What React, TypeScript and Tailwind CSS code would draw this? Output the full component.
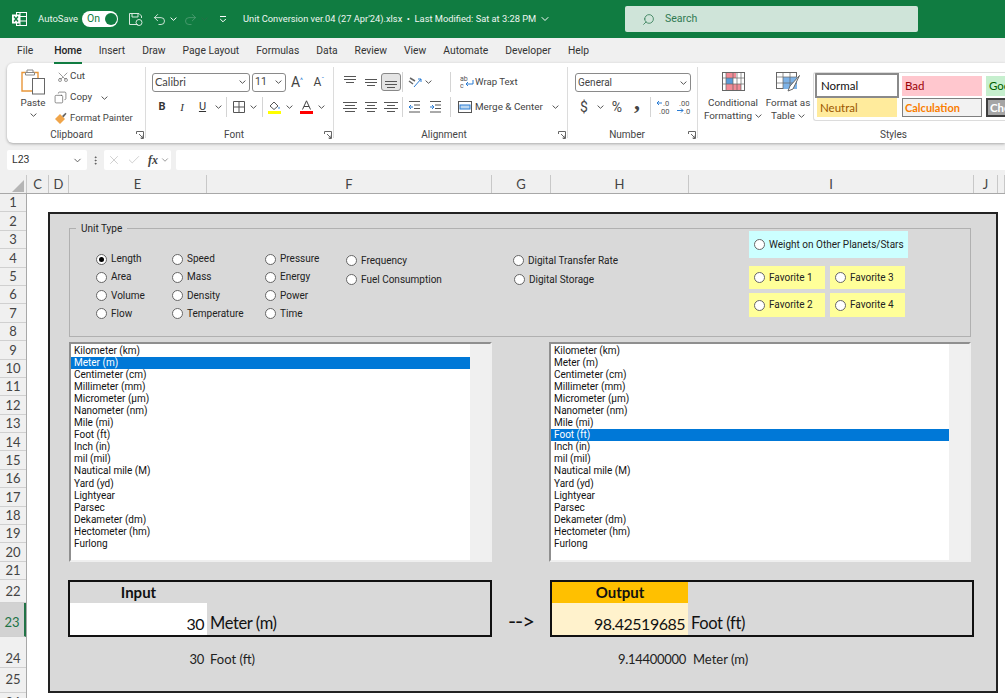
import React from 'react';
import { Search, ChevronDown, Undo2, Redo2, Scissors, Copy, X, Check, MoreVertical } from 'lucide-react';

const ROWS: [string, string][] = [
  ...Array.from({ length: 21 }, (_, i): [string, string] => [String(i + 1), 'h-[18.4px] pt-px']),
  ['22', 'h-[23px] pt-[2px]'],
  ['23', 'h-[34px] pt-[6px]'],
  ['24', 'h-[31px] pt-[13px]'],
  ['25', 'h-[25px] pt-0'],
  ['26', 'h-[20px] pt-0'],
];

const COLS: [string, string][] = [
  ['C', 'w-[22px]'], ['D', 'w-[20px]'], ['E', 'w-[138px]'], ['F', 'w-[285px]'], ['G', 'w-[59px]'],
  ['H', 'w-[138px]'], ['I', 'w-[285px]'], ['J', 'w-[24px]'], ['', 'w-[7px]'],
];

const TABS = ['File', 'Home', 'Insert', 'Draw', 'Page Layout', 'Formulas', 'Data', 'Review', 'View', 'Automate', 'Developer', 'Help'];

const UNITS = [
  'Kilometer (km)', 'Meter (m)', 'Centimeter (cm)', 'Millimeter (mm)', 'Micrometer (µm)', 'Nanometer (nm)', 'Mile (mi)', 'Foot (ft)',
  'Inch (in)', 'mil (mil)', 'Nautical mile (M)', 'Yard (yd)', 'Lightyear', 'Parsec', 'Dekameter (dm)', 'Hectometer (hm)', 'Furlong',
];

const Caret = ({ className = '' }: { className?: string }) => (
  <svg width="7" height="4" viewBox="0 0 7 4" className={className}>
    <path d="M.6.6 3.5 3.3 6.4.6" fill="none" stroke="#555" strokeWidth="1" />
  </svg>
);

const Launcher = () => (
  <svg width="8" height="8" viewBox="0 0 8 8" className="absolute right-[2px] bottom-[4px]">
    <path d="M.5 3V.5H7.5V7.5H5M3 3 7 7M7 4.5V7H4.5" fill="none" stroke="#666" strokeWidth="1" />
  </svg>
);

const Sep = () => <div className="w-px h-[20px] bg-[#d4d4d4]" />;

const Lines = ({ rows }: { rows: [number, number][] }) => (
  <svg width="14" height="12" viewBox="0 0 14 12">
    {rows.map(([x, y], i) => (
      <rect key={i} x={x} y={y} width={14 - x * 2} height="1" fill="#555" />
    ))}
  </svg>
);

const Slot = ({ w, children }: { w: string; children?: React.ReactNode }) => (
  <div className={`${w} h-[18px] flex items-center justify-center shrink-0`}>{children}</div>
);

const Group = ({ w, label, labelPad, children }: { w: string; label: string; labelPad: string; children: React.ReactNode }) => (
  <div className={`${w} relative shrink-0 flex flex-col h-full`}>
    <div className="h-[66px] overflow-hidden">{children}</div>
    <div className={`${labelPad} text-center text-[10px] leading-[12px] text-[#444]`}>{label}</div>
    <Launcher />
    <div className="absolute right-0 top-[4px] bottom-[5px] w-px bg-[#dcdcdc]" />
  </div>
);

const Radio = ({ label, on = false, className = '' }: { label: string; on?: boolean; className?: string }) => (
  <div className={`flex items-center gap-[4px] ${className}`}>
    <div className="w-[11px] h-[11px] rounded-full border border-[#666] bg-white shrink-0 flex items-center justify-center">
      {on && <div className="w-[5px] h-[5px] rounded-full bg-black" />}
    </div>
    <span className="text-[10px] leading-[12px] text-[#222] whitespace-nowrap">{label}</span>
  </div>
);

const UnitList = ({ selected }: { selected: string }) => (
  <div className="flex h-full border-t-2 border-l-2 border-t-[#8f8f8f] border-l-[#8f8f8f] border-b-2 border-r-2 border-b-[#efefef] border-r-[#efefef] bg-white">
    <div className="flex-1 pt-px">
      {UNITS.map((u) => (
        <div
          key={u}
          className={`h-[12.06px] leading-[12px] text-[10px] overflow-hidden whitespace-nowrap pl-[3px] ${
            u === selected ? 'bg-[#0078d7] text-white' : 'text-[#111]'
          }`}
        >
          {u}
        </div>
      ))}
    </div>
    <div className="w-[20px] bg-[#f0f0f0]" />
  </div>
);

const App: React.FC = () => {
  return (
    <div className="w-[1005px] h-[698px] overflow-hidden flex flex-col bg-[#f0f0f0] font-['Roboto',sans-serif]">
      {/* title bar */}
      <div className="h-[38px] shrink-0 bg-[#107c41] flex items-center text-white">
        <svg width="15" height="14" viewBox="0 0 15 14" className="ml-[12px]">
          <rect x="4.5" y=".5" width="10" height="13" fill="none" stroke="#fff" />
          <path d="M8 .5V13.5M4.5 4.5H14.5M4.5 9H14.5" stroke="#fff" />
          <rect x="0" y="2.5" width="8" height="9" fill="#fff" />
          <path d="M2 4.5 6 9.5M6 4.5 2 9.5" stroke="#107c41" strokeWidth="1.3" />
        </svg>
        <span className="ml-[11px] w-[44px] text-[9.5px] text-[#e8f3ec]">AutoSave</span>
        <div className="w-[36px] h-[16px] rounded-full bg-white flex items-center justify-between pl-[5px] pr-[1px]">
          <span className="text-[10.5px] leading-none text-[#107c41]">On</span>
          <div className="w-[12px] h-[12px] rounded-full bg-[#107c41]" />
        </div>
        <svg width="15" height="14" viewBox="0 0 15 14" className="ml-[10px]">
          <path d="M10 12.5H1.5V1.5H11L13.5 4V6M4 1.5V5H10V1.5" fill="none" stroke="#d7e9de" />
          <circle cx="11" cy="10.5" r="3" fill="none" stroke="#d7e9de" />
        </svg>
        <Undo2 size={15} strokeWidth={1.4} className="ml-[9px] text-[#e3f0e8]" />
        <Caret className="ml-[3px] [&>path]:stroke-white" />
        <Redo2 size={15} strokeWidth={1.4} className="ml-[6px] text-[#4f9d72]" />
        <Caret className="ml-[3px] opacity-30" />
        <svg width="8" height="7" viewBox="0 0 8 7" className="ml-[11px]">
          <path d="M1 .5H7M1.2 3 4 5.8 6.8 3" fill="none" stroke="#fff" />
        </svg>
        <span className="ml-[16px] w-[296px] text-[9.3px] text-[#eef6f1] whitespace-nowrap">
          Unit Conversion ver.04 (27 Apr'24).xlsx&nbsp; •&nbsp; Last Modified: Sat at 3:28 PM
        </span>
        <ChevronDown size={12} className="text-white" />
        <div className="ml-[74px] w-[293px] h-[26px] rounded-[2px] bg-[#cfe4d9] flex items-center text-[#2f7a53]">
          <Search size={13} strokeWidth={1.5} className="ml-[17px] -scale-x-100" />
          <span className="ml-[10px] text-[10.5px]">Search</span>
        </div>
      </div>

      {/* ribbon tabs */}
      <div className="h-[25px] shrink-0 flex items-center gap-[17px] pl-[17px] pt-px text-[10.3px] text-[#333]">
        {TABS.map((t) => (
          <div
            key={t}
            className={`relative whitespace-nowrap ${t === 'Home' ? 'font-medium text-[#222]' : ''} ${t === 'File' ? 'mr-[4px]' : ''}`}
          >
            {t}
            {t === 'Home' && <div className="absolute left-0 right-0 -bottom-[5px] h-[2px] bg-[#107c41]" />}
          </div>
        ))}
      </div>

      {/* ribbon */}
      <div className="ml-[7px] h-[80px] shrink-0 flex bg-white rounded-l-[6px] shadow-[0_1px_3px_rgba(0,0,0,0.3)] text-[#444]">
        <Group w="w-[139px]" label="Clipboard" labelPad="pr-[10px]">
          <div className="flex pt-[6px]">
            <div className="w-[52px] flex flex-col items-center">
              <svg width="24" height="26" viewBox="0 0 24 26">
                <path d="M1 3.5H17V22H1Z" fill="#fff" stroke="#e8963a" strokeWidth="1.4" />
                <path d="M6 3.5H12V1H6ZM4.5 3.5H13.5V6H4.5Z" fill="#fff" stroke="#888" />
                <rect x="11.5" y="9.5" width="12" height="15.5" fill="#fff" stroke="#666" />
              </svg>
              <span className="mt-[1px] text-[9.8px] leading-[14px]">Paste</span>
              <Caret className="mt-[3px]" />
            </div>
            <div className="text-[9.8px] -mt-[3px] ml-[-5px]">
              <div className="h-[21px] flex items-center">
                <Scissors size={12} strokeWidth={1.2} className="-rotate-90 ml-[3px] text-[#555]" />
                <span className="ml-[1px]">Cut</span>
              </div>
              <div className="h-[21px] flex items-center">
                <Copy size={13} strokeWidth={1.2} className="-scale-x-100 text-[#555]" />
                <span className="ml-[3px]">Copy</span>
                <Caret className="ml-[9px]" />
              </div>
              <div className="h-[21px] flex items-center whitespace-nowrap">
                <svg width="13" height="13" viewBox="0 0 13 13">
                  <path d="M1 7 6 2 11 7 6 12Z" fill="#f0a54a" />
                  <path d="M8 4 11.5 .8 12.5 1.8 9.5 5.5" fill="#666" />
                </svg>
                <span className="ml-[3px] text-[9.5px]">Format Painter</span>
              </div>
            </div>
          </div>
        </Group>

        <Group w="w-[188px]" label="Font" labelPad="pr-[12px]">
          <div className="pt-[10px] pl-[6px]">
            <div className="flex items-center h-[18px]">
              <div className="w-[98px] h-[19px] rounded-[3px] border border-[#8a8a8a] flex items-center justify-between px-[2px] font-['Lato',sans-serif] text-[11px]">
                Calibri
                <Caret className="mr-[1px]" />
              </div>
              <div className="ml-[2px] w-[34px] h-[19px] rounded-[3px] border border-[#8a8a8a] flex items-center justify-between px-[2px] text-[10.5px]">
                11
                <Caret className="mr-[1px]" />
              </div>
              <Slot w="w-[22px]"><span className="text-[14px] text-[#444]">A<sup className="text-[7px] text-[#2b7cd3]">^</sup></span></Slot>
              <Slot w="w-[22px]"><span className="text-[12px] text-[#444]">A<sup className="text-[7px] text-[#2b7cd3]">ˇ</sup></span></Slot>
            </div>
            <div className="flex items-center h-[18px] mt-[7px]">
              <Slot w="w-[20px]"><span className="font-bold text-[11px] text-[#333]">B</span></Slot>
              <Slot w="w-[20px]"><span className="italic text-[11px] text-[#333] font-['Liberation_Serif',serif]">I</span></Slot>
              <Slot w="w-[21px]"><span className="underline text-[11px] text-[#333]">U</span></Slot>
              <Slot w="w-[10px]"><Caret /></Slot>
              <Slot w="w-[7px]"><Sep /></Slot>
              <Slot w="w-[18px]">
                <svg width="12" height="12" viewBox="0 0 12 12"><path d="M.5.5H11.5V11.5H.5ZM6 .5V11.5M.5 6H11.5" fill="none" stroke="#555" /></svg>
              </Slot>
              <Slot w="w-[11px]"><Caret /></Slot>
              <Slot w="w-[7px]"><Sep /></Slot>
              <Slot w="w-[16px]">
                <svg width="13" height="14" viewBox="0 0 13 14">
                  <path d="M2 6 6 2 10 6 6 9.5Z" fill="#fff" stroke="#555" />
                  <path d="M11 6.5 12 8.5H10Z" fill="#2b7cd3" />
                  <rect x="0" y="11" width="13" height="3" fill="#ffff00" />
                </svg>
              </Slot>
              <Slot w="w-[14px]"><Caret /></Slot>
              <Slot w="w-[20px]">
                <svg width="13" height="14" viewBox="0 0 13 14">
                  <path d="M2.5 9.5 6.5 .8 10.5 9.5M4 6.5H9" fill="none" stroke="#444" strokeWidth="1" />
                  <rect x="0" y="11" width="13" height="3" fill="#ff0000" />
                </svg>
              </Slot>
              <Slot w="w-[11px]"><Caret /></Slot>
            </div>
          </div>
        </Group>

        <Group w="w-[234px]" label="Alignment" labelPad="pr-[14px]">
          <div className="pt-[10px] pl-[5px]">
            <div className="flex items-center h-[18px]">
              <Slot w="w-[21px]"><Lines rows={[[1, 0], [1, 3], [3, 6]]} /></Slot>
              <Slot w="w-[21px]"><Lines rows={[[1, 3], [1, 6], [3, 9]]} /></Slot>
              <div className="w-[20px] h-[18px] rounded-[3px] border border-[#888] bg-[#e4e4e4] flex items-center justify-center"><Lines rows={[[1, 5], [1, 8], [3, 11]]} /></div>
              <Slot w="w-[3px]"><Sep /></Slot>
              <Slot w="w-[21px]">
                <svg width="14" height="13" viewBox="0 0 14 13">
                  <path d="M2 2 7 5M1 5 5 8" stroke="#666" strokeWidth="1.5" />
                  <path d="M6 11 13 3M13 3H10M13 3V6" fill="none" stroke="#2b7cd3" />
                </svg>
              </Slot>
              <Slot w="w-[7px]"><Caret /></Slot>
              <Slot w="w-[18px]" />
              <Sep />
              <Slot w="w-[8px]" />
              <Slot w="w-[15px]">
                <svg width="14" height="14" viewBox="0 0 14 14">
                  <text x="0" y="6" fontSize="7" fill="#555">ab</text>
                  <text x="0" y="13" fontSize="7" fill="#555">c</text>
                  <path d="M13 5V9H6M8 7 6 9 8 11" fill="none" stroke="#2b7cd3" />
                </svg>
              </Slot>
              <span className="ml-px text-[9.6px] whitespace-nowrap">Wrap Text</span>
            </div>
            <div className="flex items-center h-[18px] mt-[7px]">
              <Slot w="w-[21px]"><Lines rows={[[0, 1], [2, 4], [0, 7], [2, 10]]} /></Slot>
              <Slot w="w-[21px]"><Lines rows={[[1, 1], [3, 4], [1, 7], [3, 10]]} /></Slot>
              <Slot w="w-[20px]"><Lines rows={[[0, 1], [3, 4], [0, 7], [3, 10]]} /></Slot>
              <Slot w="w-[3px]"><Sep /></Slot>
              <Slot w="w-[21px]">
                <svg width="13" height="12" viewBox="0 0 13 12"><path d="M1 .5H12M6 4H12M6 7.5H12M1 11H12" stroke="#555" /><path d="M5 6H1M3 4 1 6 3 8" fill="none" stroke="#2b7cd3" /></svg>
              </Slot>
              <Slot w="w-[20px]">
                <svg width="13" height="12" viewBox="0 0 13 12"><path d="M1 .5H12M6 4H12M6 7.5H12M1 11H12" stroke="#555" /><path d="M1 6H5M3 4 5 6 3 8" fill="none" stroke="#2b7cd3" /></svg>
              </Slot>
              <Slot w="w-[10px]"><Sep /></Slot>
              <Slot w="w-[3px]" />
              <Slot w="w-[14px]">
                <svg width="14" height="12" viewBox="0 0 14 12">
                  <rect x=".5" y=".5" width="13" height="11" fill="#fff" stroke="#555" />
                  <rect x="2" y="4" width="10" height="4" fill="#bcd7f0" stroke="#2b7cd3" />
                </svg>
              </Slot>
              <span className="ml-[3px] w-[70px] text-[9.9px] whitespace-nowrap">Merge &amp; Center</span>
              <Caret className="ml-[7px]" />
            </div>
          </div>
        </Group>

        <Group w="w-[130px]" label="Number" labelPad="pr-[12px]">
          <div className="pt-[10px] pl-[7px]">
            <div className="w-[116px] h-[19px] rounded-[3px] border border-[#8a8a8a] flex items-center justify-between px-[2px] text-[10px]">
              General
              <Caret className="mr-[1px]" />
            </div>
            <div className="flex items-center h-[18px] mt-[6px]">
              <Slot w="w-[18px]"><span className="text-[14px] text-[#444]">$</span></Slot>
              <Slot w="w-[14px]"><Caret /></Slot>
              <Slot w="w-[20px]"><span className="text-[14px] text-[#444]">%</span></Slot>
              <Slot w="w-[20px]"><span className="text-[24px] leading-[12px] -mt-[12px] font-bold text-[#444] font-['Liberation_Serif',serif]">,</span></Slot>
              <Slot w="w-[6px]"><Sep /></Slot>
              <Slot w="w-[20px]">
                <svg width="15" height="14" viewBox="0 0 15 14"><text x="7" y="6" fontSize="7.5" fill="#555">.0</text><text x="3" y="13.5" fontSize="7.5" fill="#555">.00</text><path d="M6 3H1M3 1 1 3 3 5" fill="none" stroke="#2b7cd3" /></svg>
              </Slot>
              <Slot w="w-[21px]">
                <svg width="15" height="14" viewBox="0 0 15 14"><text x="3" y="6" fontSize="7.5" fill="#555">.00</text><text x="8" y="13.5" fontSize="7.5" fill="#555">.0</text><path d="M1 10.5H7M5 8.5 7 10.5 5 12.5" fill="none" stroke="#2b7cd3" /></svg>
              </Slot>
            </div>
          </div>
        </Group>

        <div className="flex-1 flex flex-col min-w-0 relative">
          <div className="h-[66px] flex overflow-hidden">
            <div className="w-[70px] pt-[9px] flex flex-col items-center shrink-0">
              <svg width="23" height="19" viewBox="0 0 23 19">
                <rect x=".5" y=".5" width="22" height="18" fill="#fff" stroke="#666" />
                <rect x="4" y="1" width="10" height="5" fill="#f28a96" />
                <rect x="4" y="6" width="7" height="6" fill="#5a9bd8" />
                <rect x="4" y="12" width="15" height="6" fill="#f28a96" />
                <path d="M4 0V19M11 0V19M15 0V19M19 0V19M0 6H23M0 12H23" stroke="#666" strokeWidth=".7" />
              </svg>
              <div className="mt-[5px] text-[9.9px] leading-[13px] text-center whitespace-nowrap">
                Conditional
                <div className="flex items-center justify-center gap-[3px]">Formatting<Caret /></div>
              </div>
            </div>
            <div className="w-[40px] pt-[9px] flex flex-col items-center shrink-0">
              <svg width="25" height="20" viewBox="0 0 25 20">
                <rect x=".5" y=".5" width="20" height="16" fill="#fff" stroke="#666" />
                <rect x="7" y="5" width="14" height="12" fill="#7db3e8" />
                <path d="M7 0V17M14 0V17M0 5H21M0 11H21" stroke="#666" strokeWidth=".7" />
                <path d="M23.5 3.5 14 14 12 19 17 17Z" fill="#fff" stroke="#666" />
              </svg>
              <div className="mt-[4px] text-[9.9px] leading-[13px] text-center whitespace-nowrap">
                Format as
                <div className="flex items-center justify-center gap-[3px]">Table<Caret /></div>
              </div>
            </div>
            <div className="ml-[5px] mt-[9px] h-[49px] flex-1 min-w-0 border border-r-0 border-[#dcdcdc] rounded-l-[3px] grid grid-cols-[86px_84px_84px] grid-rows-[25px_21px] overflow-hidden text-[11.5px] leading-none font-['Lato',sans-serif]">
              <div className="border-2 border-[#8a8a8a] bg-white mx-[1px] flex items-center pl-[4px] text-[#111]">Normal</div>
              <div className="bg-[#ffc7ce] mt-[3px] mb-[2px] mx-[2px] flex items-center pl-[3px] text-[#9c0006]">Bad</div>
              <div className="bg-[#c6efce] mt-[3px] mb-[2px] mx-[2px] flex items-center pl-[3px] text-[#006100]">Good</div>
              <div className="bg-[#ffeb9c] mx-[3px] mb-[2px] flex items-center pl-[3px] text-[#9c5700]">Neutral</div>
              <div className="bg-[#f2f2f2] border border-[#7f7f7f] mx-[2px] mb-[2px] flex items-center pl-[2px] font-bold text-[#fa7d00] text-[11px]">Calculation</div>
              <div className="bg-[#a5a5a5] border-2 border-[#3f3f3f] mx-[2px] mb-[2px] flex items-center pl-[2px] font-bold text-white">Check</div>
            </div>
          </div>
          <div className="pl-[84px] text-center text-[10px] leading-[12px]">Styles</div>
        </div>
      </div>

      {/* formula bar */}
      <div className="h-[20px] mt-[7px] shrink-0 flex items-stretch">
        <div className="ml-[7px] w-[80px] bg-white rounded-[2px] flex items-center justify-between pl-[5px] pr-[4px] text-[10.5px] text-[#333]">
          L23
          <ChevronDown size={11} className="text-[#555]" />
        </div>
        <div className="w-[17px] flex items-center justify-center">
          <MoreVertical size={11} className="text-[#555]" />
        </div>
        <div className="w-[67px] bg-white rounded-[2px] flex items-center pl-[3px] text-[#bcbcbc]">
          <X size={14} strokeWidth={1.2} />
          <Check size={14} strokeWidth={1.2} className="ml-[6px]" />
          <span className="ml-[7px] italic font-bold text-[12px] text-[#444] font-['Liberation_Serif',serif]">fx</span>
          <ChevronDown size={10} className="ml-[2px] text-[#888]" />
        </div>
        <div className="ml-[5px] flex-1 bg-white rounded-l-[2px]" />
      </div>

      {/* column headers */}
      <div className="h-[19px] mt-[5px] shrink-0 flex border-b border-[#a8a8a8] text-[13px] leading-[19px] text-[#444] font-['Lato',sans-serif]">
        <div className="w-[27px] shrink-0 relative border-r border-[#c8c8c8]">
          <svg width="12" height="12" viewBox="0 0 12 12" className="absolute right-[2px] bottom-[1px]">
            <path d="M12 0V12H0Z" fill="#b5b5b5" />
          </svg>
        </div>
        {COLS.map(([c, w]) => (
          <div key={c} className={`${w} text-center border-r border-[#c8c8c8] shrink-0`}>{c}</div>
        ))}
      </div>

      <div className="flex-1 min-h-0 flex">
        {/* row headers */}
        <div className="w-[27px] shrink-0 border-r border-[#a8a8a8] text-[13px] text-[#444] font-['Lato',sans-serif]">
          {ROWS.map(([r, h]) => (
            <div
              key={r}
              className={`${h} flex items-center justify-center border-b border-[#d0d0d0] ${
                r === '23' ? 'bg-[#d2d2d2] text-[#217346] border-r-2 border-r-[#217346]' : ''
              }`}
            >
              {r}
            </div>
          ))}
        </div>

        {/* sheet */}
        <div className="flex-1 bg-white pl-[21px] pt-[18px]">
          <div className="w-[950px] h-[481px] border-2 border-[#222] bg-[#d9d9d9] flex flex-col">
            {/* unit type group */}
            <div className="relative ml-[19px] mt-[14px] w-[902px] h-[109px] shrink-0 border border-[#b0b0b0] flex">
              <span className="absolute left-[6px] -top-[6px] bg-[#d9d9d9] px-[5px] text-[10px] leading-[12px] text-[#222]">Unit Type</span>
              <div className="w-[102px] pl-[26px] pt-[21px] shrink-0">
                <Radio label="Length" on className="h-[18px]" />
                <Radio label="Area" className="h-[18.4px]" />
                <Radio label="Volume" className="h-[18.4px]" />
                <Radio label="Flow" className="h-[18.4px]" />
              </div>
              <div className="w-[93px] pt-[21px] shrink-0">
                <Radio label="Speed" className="h-[18px]" />
                <Radio label="Mass" className="h-[18.4px]" />
                <Radio label="Density" className="h-[18.4px]" />
                <Radio label="Temperature" className="h-[18.4px]" />
              </div>
              <div className="w-[81px] pt-[21px] shrink-0">
                <Radio label="Pressure" className="h-[18px]" />
                <Radio label="Energy" className="h-[18.4px]" />
                <Radio label="Power" className="h-[18.4px]" />
                <Radio label="Time" className="h-[18.4px]" />
              </div>
              <div className="w-[167px] pt-[22px] shrink-0">
                <Radio label="Frequency" className="h-[19px]" />
                <Radio label="Fuel Consumption" className="h-[19px]" />
              </div>
              <div className="w-[236px] pt-[22px] shrink-0">
                <Radio label="Digital Transfer Rate" className="h-[19px]" />
                <Radio label="Digital Storage" className="h-[19px] ml-px" />
              </div>
              <div className="pt-[2px] shrink-0">
                <div className="w-[159px] h-[27px] bg-[#ccffff] pl-[5px] flex items-center">
                  <Radio label="Weight on Other Planets/Stars" />
                </div>
                <div className="mt-[8px] flex gap-[5px]">
                  <div className="w-[76px] h-[23px] bg-[#ffff99] pl-[5px] flex items-center"><Radio label="Favorite 1" /></div>
                  <div className="w-[75px] h-[23px] bg-[#ffff99] pl-[5px] flex items-center"><Radio label="Favorite 3" /></div>
                </div>
                <div className="mt-[4px] flex gap-[5px]">
                  <div className="w-[76px] h-[24px] bg-[#ffff99] pl-[5px] flex items-center"><Radio label="Favorite 2" /></div>
                  <div className="w-[75px] h-[24px] bg-[#ffff99] pl-[5px] flex items-center"><Radio label="Favorite 4" /></div>
                </div>
              </div>
            </div>

            {/* unit lists */}
            <div className="ml-[19px] mt-[5px] h-[220px] shrink-0 flex">
              <div className="w-[423px]"><UnitList selected="Meter (m)" /></div>
              <div className="ml-[57px] w-[422px]"><UnitList selected="Foot (ft)" /></div>
            </div>

            {/* input and output */}
            <div className="ml-[18px] mt-[18px] h-[57px] shrink-0 flex font-['Lato',sans-serif] text-[#111]">
              <div className="w-[424px] border-2 border-[#111] flex flex-col">
                <div className="w-[137px] h-[21px] text-center font-bold text-[15px] leading-[21px]">Input</div>
                <div className="h-[32px] flex items-end text-[16.5px] leading-[23px]">
                  <div className="w-[137px] h-full bg-white flex items-end justify-end pr-[3px] text-[16px] tracking-[-0.5px]">30</div>
                  <span className="ml-[3px] tracking-[-0.4px]">Meter (m)</span>
                </div>
              </div>
              <div className="w-[58px] flex items-center justify-center pt-[24px] text-[22px] tracking-[-1px]">--&gt;</div>
              <div className="w-[424px] border-2 border-[#111] flex flex-col">
                <div className="w-[136px] h-[21px] bg-[#ffc000] text-center font-bold text-[15px] leading-[21px]">Output</div>
                <div className="h-[32px] flex items-end text-[16.5px] leading-[23px]">
                  <div className="w-[136px] h-full bg-[#fff2cc] flex items-end justify-end pr-[3px] text-[16px] tracking-[-0.5px]">98.42519685</div>
                  <span className="ml-[3px] tracking-[-0.4px]">Foot (ft)</span>
                </div>
              </div>
            </div>

            {/* reverse conversion */}
            <div className="ml-[18px] mt-[13px] flex text-[13px] leading-[18px] text-[#222] font-['Lato',sans-serif]">
              <div className="w-[136px] text-right tracking-[-0.3px]">30</div>
              <span className="ml-[6px] w-[340px]">Foot (ft)</span>
              <div className="w-[136px] text-right tracking-[-0.3px]">9.14400000</div>
              <span className="ml-[7px]">Meter (m)</span>
            </div>
          </div>
        </div>
      </div>
    </div>
  );
};

export default App;
